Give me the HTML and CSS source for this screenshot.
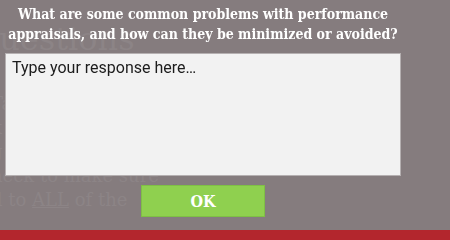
FILE: index.html
```html
<!DOCTYPE html>
<html lang="en">
<head>
  <meta charset="UTF-8" />
  <meta name="viewport" content="width=device-width, initial-scale=1.0"/>
  <title>Review Questions</title>
  <link rel="stylesheet" href="styles.css">
</head>
<body>

<div class="page">
  <h2 class="page-title">Questions</h2>
  <p class="page-line">Take your time</p>
  <p class="page-line">k each</p>
  <p class="page-line">g the case</p>
  <p class="page-line">heck to make sure</p>
  <p class="page-line">d to <u>ALL</u> of the</p>
</div>

<footer class="red-bar"></footer>

<div class="overlay">
  <div class="modal">
    <h3 class="modal-title">What are some common problems with performance<br>appraisals, and how can they be minimized or avoided?</h3>
    <textarea class="answer" placeholder="Type your response here…"></textarea>
    <button class="ok-btn">OK</button>
  </div>
</div>

</body>
</html>
```

FILE: styles.css
```css
body {
  margin: 0;
  height: 240px;
  overflow: hidden;
  background-color: #857c7e;
  font-family: "DejaVu Serif", serif;
  display: flex;
  flex-direction: column;
}
.page {
  flex: 1;
  color: #8c8486;
}
.page-title {
  font-weight: normal;
  font-size: 32px;
  line-height: 36px;
  margin: 21px 0 35px -27px;
}
.page-line {
  font-size: 18px;
  line-height: 24px;
  margin: 0 0 0 -9px;
  white-space: nowrap;
}
.red-bar {
  height: 10px;
  background-color: #b3262d;
}
.overlay {
  position: fixed;
  top: 0;
  left: 0;
  right: 0;
  bottom: 10px;
  padding: 4px 5px;
}
.modal {
  width: 396px;
  display: flex;
  flex-direction: column;
  align-items: center;
}
.modal-title {
  margin: 0;
  color: white;
  font-family: "DejaVu Serif", serif;
  font-stretch: condensed;
  font-weight: bold;
  font-size: 14px;
  line-height: 20px;
  text-align: center;
  white-space: nowrap;
}
.answer {
  box-sizing: border-box;
  width: 396px;
  height: 123px;
  margin-top: 9px;
  padding: 4px 6px;
  background-color: #f2f2f2;
  border: 1px solid #b5b0b1;
  font-family: Roboto, sans-serif;
  font-size: 16px;
  resize: none;
}
.answer::placeholder {
  color: #1c1c1c;
}
.ok-btn {
  width: 124px;
  height: 32px;
  margin-top: 9px;
  background-color: #8fd04f;
  border: 1px solid #7fbf45;
  color: white;
  font-family: "DejaVu Serif", serif;
  font-stretch: condensed;
  font-weight: bold;
  font-size: 16px;
}
```
